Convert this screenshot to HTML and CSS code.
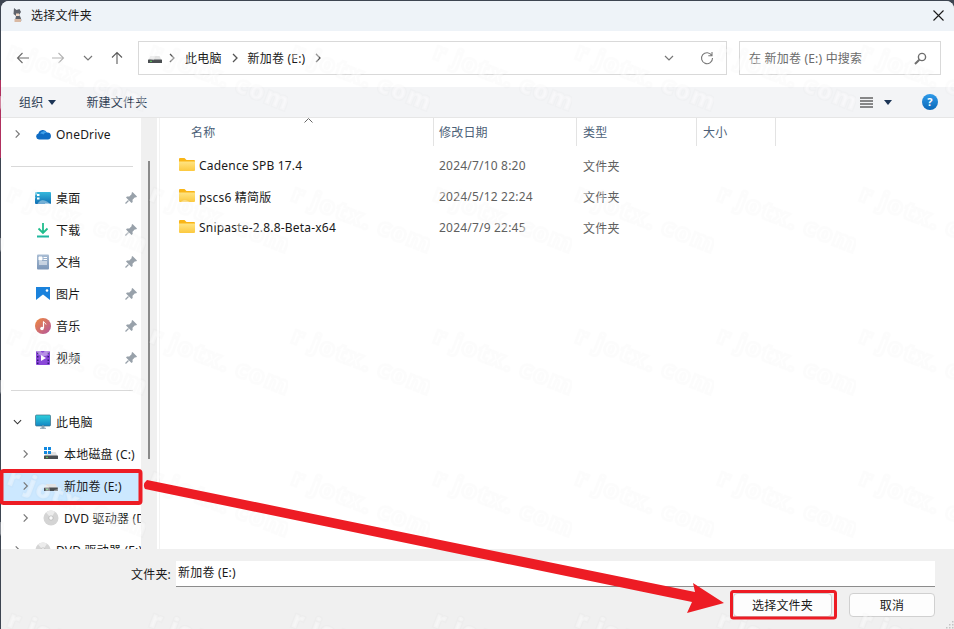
FILE: index.html
```html
<!DOCTYPE html>
<html lang="zh-CN">

<head>
     <meta charset="UTF-8">
     <title>选择文件夹</title>
     <link rel="stylesheet" href="styles.css">
</head>

<body>
     <svg class="sprite" aria-hidden="true">
          <defs>
               <linearGradient id="g-desk" x1="0" y1="0" x2="0" y2="1"><stop offset="0" stop-color="#35b8dc"/><stop offset="1" stop-color="#0f6fb5"/></linearGradient>
               <linearGradient id="g-doc" x1="0" y1="0" x2="0" y2="1"><stop offset="0" stop-color="#a9bdd4"/><stop offset="1" stop-color="#7b96b8"/></linearGradient>
               <linearGradient id="g-music" x1="0" y1="0" x2="1" y2="1"><stop offset="0" stop-color="#f08a3c"/><stop offset="1" stop-color="#b3559f"/></linearGradient>
               <linearGradient id="g-pc" x1="0" y1="0" x2="0" y2="1"><stop offset="0" stop-color="#2fd0dc"/><stop offset="1" stop-color="#1286c4"/></linearGradient>
               <linearGradient id="g-help" x1="0" y1="0" x2="0" y2="1"><stop offset="0" stop-color="#2f9bea"/><stop offset="1" stop-color="#0b68b8"/></linearGradient>
               <linearGradient id="g-folder" x1="0" y1="0" x2="0" y2="1"><stop offset="0" stop-color="#ffe483"/><stop offset="1" stop-color="#fcc93f"/></linearGradient>
          </defs>
          <symbol id="chev" viewBox="0 0 10 10"><path d="M3 1l4 4-4 4" fill="none" stroke="currentColor" stroke-width="1.3"/></symbol>
          <symbol id="chev-down" viewBox="0 0 10 10"><path d="M1 3l4 4 4-4" fill="none" stroke="currentColor" stroke-width="1.2"/></symbol>
          <symbol id="caret" viewBox="0 0 8 5"><path d="M0 0h8L4 5z" fill="#1c3556"/></symbol>
          <symbol id="pin" viewBox="0 0 12 12"><path d="M7.500 0L12 4.500 11 5.500 10 5.200 7.500 7.700 7.700 10 6.500 11 1 5.500 2 4.500 4.300 4.500 6.800 2 6.500 1z" fill="#98a1aa"/><path d="M3.500 8.500L.5 11.500" stroke="#98a1aa" stroke-width="1.200"/></symbol>
          <symbol id="drive" viewBox="0 0 16 16"><path d="M3.500 6h9l2 4H1.500z" fill="#e4e4e4"/><rect x="1" y="9.500" width="14" height="3.500" rx=".6" fill="#4b4f52"/><rect x="3" y="10.800" width="2" height="1" fill="#5fd35f"/></symbol>
          <symbol id="disc" viewBox="0 0 16 16"><circle cx="8" cy="8" r="7.500" fill="#d4d4d4"/><path d="M8 8L3 2.500A7.500 7.500 0 0 1 12 1.700z" fill="#ececec"/><circle cx="8" cy="8" r="2.200" fill="#fafafa" stroke="#a9a9a9" stroke-width=".6"/></symbol>
          <symbol id="folder" viewBox="0 0 16 16"><path d="M0 3a1 1 0 0 1 1-1h4.500l2 2H15a1 1 0 0 1 1 1v1H0z" fill="#f9b517"/><path d="M0 5.500h16V14a1 1 0 0 1-1 1H1a1 1 0 0 1-1-1z" fill="url(#g-folder)"/></symbol>
     </svg>

     <div class="window">
          <div class="titlebar">
               <svg class="app-icon" viewBox="0 0 12 14">
                    <path d="M2 0l2.500 2 3-1 1.500 3-2 3 1.500 2 1 3.500H3l1-4.500-2.500-2z" fill="#5f636b"/>
                    <path d="M4 5.500h3v2.500H4z" fill="#f2d9c6"/>
                    <path d="M2.500 11h6.500v3H2.500z" fill="#d9b9a3"/>
               </svg>
               <span class="title-text">选择文件夹</span>
               <svg class="close-icon" viewBox="0 0 11 11"><path d="M.5.5l10 10M10.500.5l-10 10" stroke="#1a1a1a" stroke-width="1.100"/></svg>
          </div>

          <div class="navbar">
               <div class="nav-buttons">
                    <svg class="nav-arrow arrow-back" viewBox="0 0 14 14"><path d="M13 7H1.500M6.500 2l-5 5 5 5" fill="none" stroke="#6a6a6a" stroke-width="1.100"/></svg>
                    <svg class="nav-arrow arrow-forward" viewBox="0 0 14 14"><path d="M1 7h11.500M7.500 2l5 5-5 5" fill="none" stroke="#b4b4b4" stroke-width="1.100"/></svg>
                    <svg class="nav-chev"><use href="#chev-down"/></svg>
                    <svg class="nav-arrow arrow-up" viewBox="0 0 14 14"><path d="M7 13V1.500M2 6.500l5-5 5 5" fill="none" stroke="#5a5a5a" stroke-width="1.100"/></svg>
               </div>
               <div class="address">
                    <svg class="addr-drive"><use href="#drive"/></svg>
                    <svg class="crumb-chev"><use href="#chev"/></svg>
                    <span class="crumb">此电脑</span>
                    <svg class="crumb-chev"><use href="#chev"/></svg>
                    <span class="crumb">新加卷 (E:)</span>
                    <svg class="crumb-chev"><use href="#chev"/></svg>
                    <svg class="addr-drop"><use href="#chev-down"/></svg>
                    <svg class="addr-refresh" viewBox="0 0 14 14"><path d="M11.800 4.500A5.500 5.500 0 1 0 12.500 7M12 1v3.700H8.300" fill="none" stroke="#7a7a7a" stroke-width="1.100"/></svg>
               </div>
               <div class="search">
                    <span>在 新加卷 (E:) 中搜索</span>
                    <svg class="search-icon" viewBox="0 0 13 13"><circle cx="8" cy="5" r="3.600" fill="none" stroke="#6e6e6e" stroke-width="1.400"/><path d="M5.300 7.700L1 12" stroke="#6e6e6e" stroke-width="2"/></svg>
               </div>
          </div>

          <div class="cmdbar">
               <span class="cmd-organize">组织</span>
               <svg class="caret"><use href="#caret"/></svg>
               <span class="cmd-new">新建文件夹</span>
               <svg class="view-icon" viewBox="0 0 13 11"><path d="M0 1h13M0 4h13M0 7h13M0 10h13" stroke="#1a1a1a" stroke-width="1"/></svg>
               <svg class="caret view-caret"><use href="#caret"/></svg>
               <svg class="help-icon" viewBox="0 0 16 16">
                    <circle cx="8" cy="8" r="8" fill="url(#g-help)"/>
                    <text x="8" y="12" text-anchor="middle" class="help-mark">?</text>
               </svg>
          </div>

          <div class="main">
               <div class="sidebar">
                    <div class="nav-row">
                         <svg class="exp"><use href="#chev"/></svg>
                         <svg class="nav-icon" viewBox="0 0 16 16"><path d="M4 13.500a3 3 0 0 1-.6-5.900A4.600 4.600 0 0 1 12 6.500a3.500 3.500 0 0 1 .8 7z" fill="#0f6cc4"/><path d="M5 7.500A4.600 4.600 0 0 1 12 6.500c-2 .2-3 1-3.500 2-1.200-.8-2.300-1.100-3.500-1z" fill="#3fa0ea"/></svg>
                         <span>OneDrive</span>
                    </div>
                    <div class="nav-sep"></div>
                    <div class="nav-row">
                         <span class="exp"></span>
                         <svg class="nav-icon" viewBox="0 0 16 16"><rect y="2" width="16" height="12" rx="1" fill="url(#g-desk)"/><path d="M2 4h2.500v2H2zM2 7.500h2.500v2H2z" fill="#fff"/><path d="M10 13h5v.6h-5z" fill="#cfeaf5"/></svg>
                         <span>桌面</span>
                         <svg class="pin"><use href="#pin"/></svg>
                    </div>
                    <div class="nav-row">
                         <span class="exp"></span>
                         <svg class="nav-icon" viewBox="0 0 16 16"><path d="M8 1v9M3.500 6.500L8 11l4.500-4.500" fill="none" stroke="#20bd8c" stroke-width="1.800"/><path d="M2 14.500h12" stroke="#20b8a0" stroke-width="1.800"/></svg>
                         <span>下载</span>
                         <svg class="pin"><use href="#pin"/></svg>
                    </div>
                    <div class="nav-row">
                         <span class="exp"></span>
                         <svg class="nav-icon" viewBox="0 0 16 16"><rect x="2" y="0.500" width="12" height="15" rx="1" fill="url(#g-doc)"/><path d="M4 3h3v3H4zM8.500 3.500h3.500M8.500 5.500h3.500M4 8h8M4 10h8" stroke="#fff" fill="#fff"/></svg>
                         <span>文档</span>
                         <svg class="pin"><use href="#pin"/></svg>
                    </div>
                    <div class="nav-row">
                         <span class="exp"></span>
                         <svg class="nav-icon" viewBox="0 0 16 16"><rect x="1" y="1" width="14" height="14" fill="#1a82dc"/><path d="M1 15v-1l7-5.500 7 5.500v1z" fill="#fff"/><circle cx="12" cy="4.500" r="1.300" fill="#fff"/></svg>
                         <span>图片</span>
                         <svg class="pin"><use href="#pin"/></svg>
                    </div>
                    <div class="nav-row">
                         <span class="exp"></span>
                         <svg class="nav-icon" viewBox="0 0 16 16"><circle cx="8" cy="8" r="8" fill="url(#g-music)"/><path d="M8.500 3.500v6.500" stroke="#fff" stroke-width="1.200"/><path d="M8.500 3.500c.5 1.500 2.500 1.500 2.500 3" fill="none" stroke="#fff" stroke-width="1"/><circle cx="7" cy="10.500" r="1.800" fill="#fff"/></svg>
                         <span>音乐</span>
                         <svg class="pin"><use href="#pin"/></svg>
                    </div>
                    <div class="nav-row">
                         <span class="exp"></span>
                         <svg class="nav-icon" viewBox="0 0 16 16"><rect x="1" y="1" width="14" height="14" rx="1" fill="#8a47d8"/><path d="M6 5l5 3-5 3z" fill="#fff"/><path d="M2 2.500h1.500v1.500H2zM2 6h1.500v1.500H2zM2 9.500h1.500V11H2zM2 12.500h1.500V14H2zM12.500 2.500H14V4h-1.500zM12.500 6H14v1.500h-1.500zM12.500 9.500H14V11h-1.500zM12.500 12.500H14V14h-1.500z" fill="#2e1a70"/></svg>
                         <span>视频</span>
                         <svg class="pin"><use href="#pin"/></svg>
                    </div>
                    <div class="nav-sep"></div>
                    <div class="nav-row">
                         <svg class="exp exp-open"><use href="#chev-down"/></svg>
                         <svg class="nav-icon" viewBox="0 0 16 16"><rect x=".5" y="1" width="15" height="11" rx="1" fill="url(#g-pc)" stroke="#3d6f86" stroke-width=".7"/><path d="M7 12h2v2H7zM5 14.300h6" stroke="#8aa3b3" fill="#8aa3b3"/></svg>
                         <span>此电脑</span>
                    </div>
                    <div class="nav-row nav-sub">
                         <svg class="exp"><use href="#chev"/></svg>
                         <svg class="nav-icon" viewBox="0 0 16 16"><use href="#drive"/><path d="M1 1h3v3H1zM5 1h3v3H5zM1 5h3v3H1zM5 5h3v3H5z" fill="#1188e0"/></svg>
                         <span>本地磁盘 (C:)</span>
                    </div>
                    <div class="nav-row nav-sub nav-selected">
                         <svg class="exp"><use href="#chev"/></svg>
                         <svg class="nav-icon"><use href="#drive"/></svg>
                         <span>新加卷 (E:)</span>
                    </div>
                    <div class="nav-row nav-sub">
                         <svg class="exp"><use href="#chev"/></svg>
                         <svg class="nav-icon"><use href="#disc"/></svg>
                         <span>DVD 驱动器 (D:)</span>
                    </div>
                    <div class="nav-row">
                         <svg class="exp"><use href="#chev"/></svg>
                         <svg class="nav-icon"><use href="#disc"/></svg>
                         <span>DVD 驱动器 (E:)</span>
                    </div>
               </div>

               <div class="scrolltrack"><div class="scrollthumb"></div></div>

               <div class="files">
                    <div class="file-head">
                         <div class="col-name head-cell">名称<svg class="sort-icon" viewBox="0 0 9 5"><path d="M.5 4.500l4-4 4 4" fill="none" stroke="#666"/></svg></div>
                         <div class="col-date head-cell">修改日期</div>
                         <div class="col-type head-cell">类型</div>
                         <div class="col-size head-cell">大小</div>
                    </div>
                    <div class="file-row">
                         <div class="col-name"><svg class="folder-icon"><use href="#folder"/></svg>Cadence SPB 17.4</div>
                         <div class="col-date">2024/7/10 8:20</div>
                         <div class="col-type">文件夹</div>
                    </div>
                    <div class="file-row">
                         <div class="col-name"><svg class="folder-icon"><use href="#folder"/></svg>pscs6 精简版</div>
                         <div class="col-date">2024/5/12 22:24</div>
                         <div class="col-type">文件夹</div>
                    </div>
                    <div class="file-row">
                         <div class="col-name"><svg class="folder-icon"><use href="#folder"/></svg>Snipaste-2.8.8-Beta-x64</div>
                         <div class="col-date">2024/7/9 22:45</div>
                         <div class="col-type">文件夹</div>
                    </div>
               </div>
          </div>

          <div class="footer">
               <div class="folder-line">
                    <label class="folder-label">文件夹:</label>
                    <div class="folder-input">新加卷 (E:)</div>
               </div>
               <div class="footer-buttons">
                    <button class="btn btn-select">选择文件夹</button>
                    <button class="btn btn-cancel">取消</button>
               </div>
               <svg class="grip" viewBox="0 0 9 9"><path d="M7 1h1.500v1.500H7zM4 4h1.500v1.500H4zM7 4h1.500v1.500H7zM1 7h1.500v1.500H1zM4 7h1.500v1.500H4zM7 7h1.500v1.500H7z" fill="#c4c4c4"/></svg>
          </div>
     </div>

     <!-- watermark tiles over the whole shot -->
     <svg class="watermark" width="954" height="629">
          <defs>
               <pattern id="wm" x="4" y="42" width="142" height="142" patternUnits="userSpaceOnUse">
                    <text x="2" y="16" transform="rotate(21 2 16)" class="wm-text">r jotx. com</text>
               </pattern>
          </defs>
          <rect width="954" height="629" fill="url(#wm)"/>
     </svg>

     <!-- red marks drawn on the screenshot -->
     <svg class="marks" width="954" height="629">
          <rect x="1.500" y="471" width="139" height="32" rx="2" fill="none" stroke="#ed1c24" stroke-width="4"/>
          <rect x="731.500" y="591.500" width="104" height="26.500" rx="2" fill="none" stroke="#ed1c24" stroke-width="3"/>
          <path d="M147 480L695 592L693 583L724 603L687 613L692 602L145 489Q142 484 147 480z" fill="#ed1c24"/>
     </svg>
</body>
</html>
```

FILE: styles.css
```css
* {
     margin: 0;
     padding: 0;
     box-sizing: border-box;
}

body {
     width: 954px;
     height: 629px;
     overflow: hidden;
     position: relative;
     font-family: "Noto Sans", "Noto Sans CJK SC", sans-serif;
     font-size: 12px;
     letter-spacing: .2px;
     color: #1a1a1a;
     background: linear-gradient(#3d4551 80px, #b0305e 80px, #b0305e 158px, #3d4551 158px);
}

.sprite {
     position: absolute;
     width: 0;
     height: 0;
}

.window {
     margin: 1px 0 0 1px;
     height: 628px;
     display: flex;
     flex-direction: column;
     border-radius: 8px 8px 0 0;
     overflow: hidden;
     background: #fff;
}

/* title */
.titlebar {
     height: 30px;
     flex: none;
     display: flex;
     align-items: center;
     padding: 0 0 2px 11px;
     background: #eef3f8;
}

.app-icon {
     width: 12px;
     height: 14px;
     margin-right: 7px;
}

.close-icon {
     width: 11px;
     height: 11px;
     margin-left: auto;
     margin-right: 10px;
}

/* nav */
.navbar {
     height: 56px;
     flex: none;
     display: flex;
     align-items: center;
     padding: 0 12px 2px 15px;
}

.nav-buttons {
     display: flex;
     align-items: center;
     width: 122px;
}

.nav-arrow {
     width: 14px;
     height: 14px;
}

.arrow-forward {
     margin-left: 21px;
}

.nav-chev {
     width: 10px;
     height: 10px;
     margin-left: 18px;
     color: #777;
}

.arrow-up {
     margin-left: 17px;
}

.address {
     width: 589px;
     height: 34px;
     display: flex;
     align-items: center;
     padding-left: 8px;
     border: 1px solid #d9d9d9;
     background: #fff;
}

.addr-drive {
     width: 16px;
     height: 16px;
}

.crumb-chev {
     width: 10px;
     height: 10px;
     margin: 0 8px 0 3px;
     color: #555;
}

.addr-drive + .crumb-chev {
     margin-left: 4px;
}

.crumb {
     margin-right: 5px;
}

.addr-drop {
     width: 10px;
     height: 10px;
     margin-left: auto;
     color: #777;
}

.addr-refresh {
     width: 14px;
     height: 14px;
     margin: 0 12px 0 26px;
}

.search {
     width: 202px;
     height: 34px;
     margin-left: 12px;
     display: flex;
     align-items: center;
     padding: 0 13px 0 9px;
     border: 1px solid #d9d9d9;
     color: #6b6b6b;
}

.search-icon {
     width: 13px;
     height: 13px;
     margin-left: auto;
}

/* commands */
.cmdbar {
     height: 31px;
     flex: none;
     display: flex;
     align-items: center;
     padding-left: 18px;
     background: #f3f4f6;
     border-bottom: 1px solid #e6e6e6;
     color: #2f3f55;
}

.caret {
     width: 8px;
     height: 5px;
     margin-left: 5px;
}

.cmd-new {
     margin-left: 30px;
}

.view-icon {
     width: 13px;
     height: 11px;
     margin-left: auto;
}

.view-caret {
     margin-left: 11px;
}

.help-icon {
     width: 16px;
     height: 16px;
     margin: 0 16px 0 30px;
}

.help-mark {
     font-size: 11px;
     font-weight: 700;
     fill: #fff;
}

/* main area */
.main {
     height: 431px;
     flex: none;
     display: flex;
     overflow: hidden;
}

.sidebar {
     width: 140px;
     flex: none;
     overflow: hidden;
     white-space: nowrap;
}

.nav-row {
     height: 32px;
     display: flex;
     align-items: center;
     padding: 0 4px 0 12px;
}

.nav-sub {
     padding-left: 20px;
}

.nav-selected {
     background: #cce8ff;
}

.nav-sep {
     height: 1px;
     margin: 16px 8px 15px 10px;
     background: #d9d9d9;
}

.exp {
     width: 9px;
     height: 10px;
     flex: none;
     margin-right: 13px;
     color: #777;
}

.exp-open {
     color: #333;
}

.nav-icon {
     width: 16px;
     height: 16px;
     flex: none;
     margin-right: 5px;
}

.pin {
     width: 12px;
     height: 12px;
     margin-left: auto;
}

.scrolltrack {
     width: 16px;
     flex: none;
     padding: 43px 0 0 7px;
     background: #f0f0f0;
}

.scrollthumb {
     width: 2px;
     height: 298px;
     background: #8a8a8a;
}

.files {
     flex: 1;
     margin-left: 2px;
     border-left: 1px solid #f2f2f2;
}

.file-head,
.file-row {
     display: grid;
     grid-template-columns: 273px 143px 120px 80px;
}

.file-head {
     height: 28px;
     align-items: stretch;
     color: #4c5f78;
     margin-bottom: 4px;
}

.head-cell {
     display: flex;
     align-items: center;
     box-shadow: inset 1px 0 0 #e3e3e3;
     position: relative;
}

.head-cell.col-name {
     box-shadow: none;
}

.head-cell.col-size {
     box-shadow: inset 1px 0 0 #e3e3e3, inset -1px 0 0 #e3e3e3;
}

.sort-icon {
     position: absolute;
     left: 144px;
     top: 0;
     width: 9px;
     height: 5px;
}

.file-row {
     height: 31px;
     align-items: center;
     color: #5f5f5f;
}

.file-head .col-name {
     padding-left: 31px;
}

.file-row .col-name {
     display: flex;
     align-items: center;
     padding-left: 19px;
     color: #1a1a1a;
}

.col-date {
     padding-left: 6px;
}

.col-type,
.col-size {
     padding-left: 7px;
}

.folder-icon {
     width: 16px;
     height: 16px;
     margin: 0 4px 3px 0;
}

/* footer */
.footer {
     flex: 1;
     position: relative;
     padding-top: 12px;
     background: #f0f0f0;
}

.folder-line {
     display: flex;
     align-items: center;
     gap: 5px;
     padding: 0 19px 0 130px;
}

.folder-input {
     flex: 1;
     height: 26px;
     line-height: 24px;
     padding-left: 2px;
     background: #fff;
     border-bottom: 1px solid #8c8c8c;
}

.footer-buttons {
     display: flex;
     justify-content: flex-end;
     gap: 17px;
     padding: 6px 19px 0 0;
}

.btn {
     height: 24px;
     font: inherit;
     letter-spacing: inherit;
     color: #1a1a1a;
     background: #fdfdfd;
     border: 1px solid #d0d0d0;
     border-radius: 4px;
}

.btn-select {
     width: 99px;
}

.btn-cancel {
     width: 86px;
}

.grip {
     position: absolute;
     right: 0;
     bottom: 0;
     width: 9px;
     height: 9px;
}

/* overlays */
.watermark,
.marks {
     position: absolute;
     left: 0;
     top: 0;
     pointer-events: none;
}

.wm-text {
     font-family: "Open Sans", sans-serif;
     font-size: 24px;
     font-weight: 800;
     letter-spacing: 1.5px;
     fill: rgba(255, 255, 255, .4);
     stroke: rgba(0, 0, 0, .012);
     stroke-width: 2.5px;
}
```
